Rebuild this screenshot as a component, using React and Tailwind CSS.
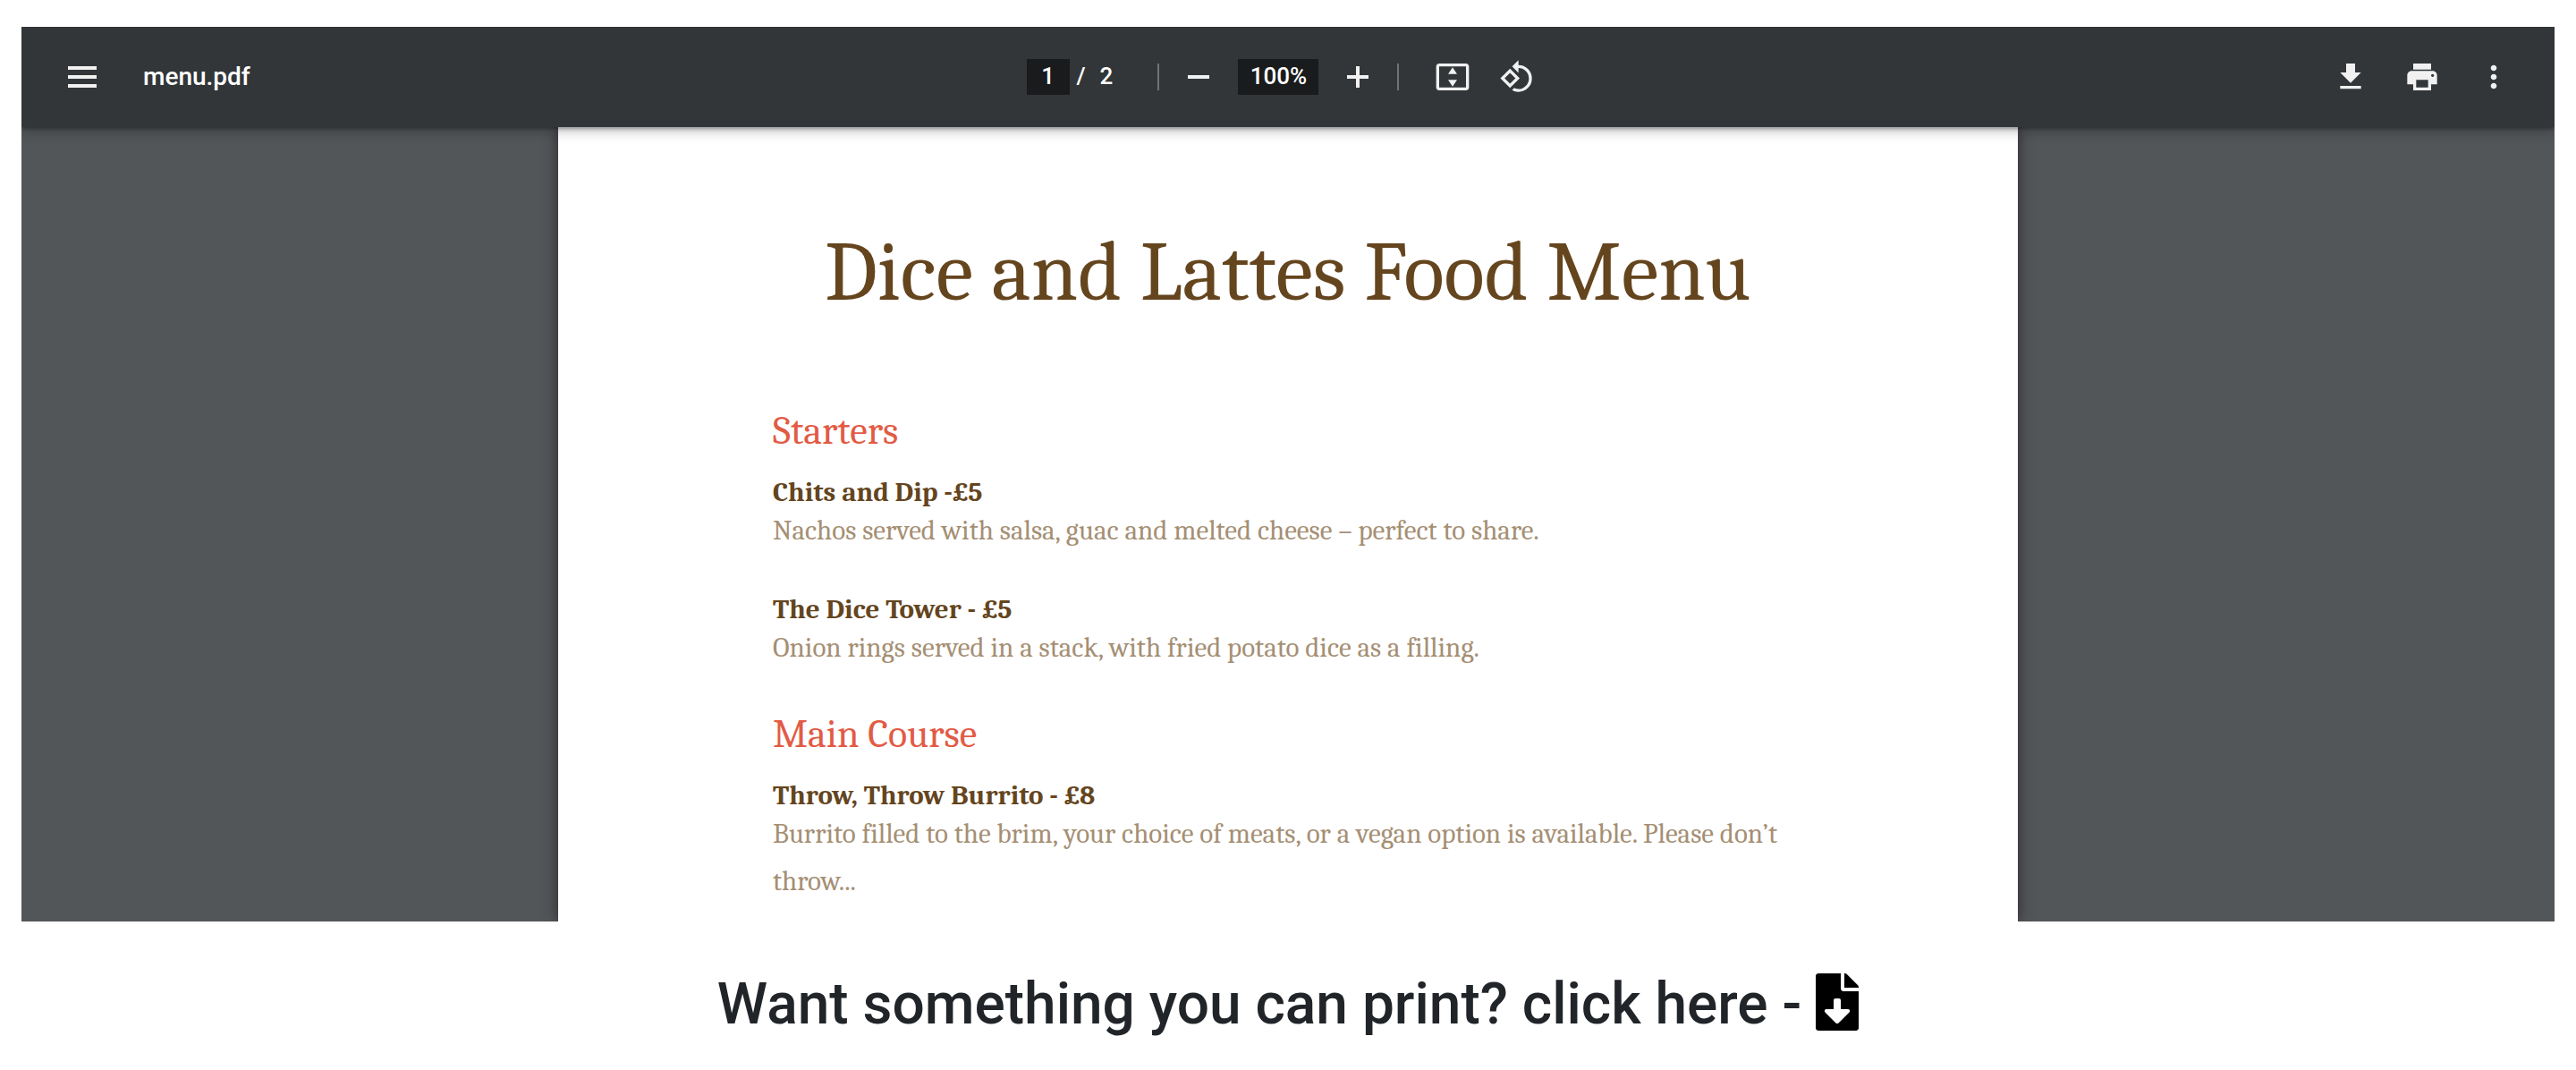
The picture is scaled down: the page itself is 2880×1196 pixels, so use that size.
import { FaFileDownload } from "react-icons/fa";
import { MdMoreVert, MdRotate90DegreesCcw } from "react-icons/md";

const sections = [
  {
    heading: "Starters",
    items: [
      { name: "Chits and Dip -£5", text: "Nachos served with salsa, guac and melted cheese – perfect to share." },
      { name: "The Dice Tower - £5", text: "Onion rings served in a stack, with fried potato dice as a filling." },
    ],
  },
  {
    heading: "Main Course",
    items: [
      {
        name: "Throw, Throw Burrito - £8",
        text: "Burrito filled to the brim, your choice of meats, or a vegan option is available. Please don’t throw...",
      },
    ],
  },
];

function ToolButton({ label, children }) {
  return (
    <button type="button" aria-label={label} className="flex size-16 shrink-0 items-center justify-center text-[#f1f1f1]">
      {children}
    </button>
  );
}

function Icon({ box, d }) {
  return (
    <svg viewBox={box} className="size-10" fill="currentColor" fillRule="evenodd" aria-hidden="true">
      <path d={d} />
    </svg>
  );
}

function Separator() {
  return <div className="h-[30px] w-0.5 bg-[#707375]" />;
}

function Toolbar() {
  return (
    <header className="relative z-10 grid h-28 grid-cols-[1fr_auto_1fr] items-center bg-[#323639] px-9 text-white shadow-[0_-4px_16px_rgba(0,0,0,0.09),0_8px_16px_rgba(0,0,0,0.06),0_2px_4px_rgba(0,0,0,0.3),0_4px_12px_rgba(0,0,0,0.15)]">
      <div className="flex items-center">
        <ToolButton label="Menu">
          <Icon box="0 0 20 20" d="M2 4h16v2H2zM2 9h16v2H2zM2 14h16v2H2z" />
        </ToolButton>
        <h1 className="ml-9 text-[28px] font-medium">menu.pdf</h1>
      </div>

      <div className="flex items-center pr-1 text-[26px] font-medium">
        <input aria-label="Page number" defaultValue="1" className="h-10 w-12 bg-[#191b1c] pb-0.5 text-center" />
        <span className="ml-2 w-[26px] pb-0.5">/</span>
        <span className="mr-[50px] pb-0.5">2</span>
        <Separator />
        <div className="flex items-center gap-3 px-3">
          <ToolButton label="Zoom out">
            <Icon box="0 0 20 20" d="M4 9h12v2H4z" />
          </ToolButton>
          <input aria-label="Zoom level" defaultValue="100%" className="h-10 w-[90px] bg-[#191b1c] pb-0.5 text-center" />
          <ToolButton label="Zoom in">
            <Icon box="0 0 20 20" d="M9 4h2v5h5v2h-5v5H9v-5H4V9h5z" />
          </ToolButton>
        </div>
        <Separator />
        <div className="ml-7 flex items-center gap-2">
          <ToolButton label="Fit to page">
            <Icon
              box="0 0 24 24"
              d="M21 3H3c-1.100 0-2 .9-2 2v14c0 1.100.9 2 2 2h18c1.100 0 2-.9 2-2V5c0-1.100-.9-2-2-2zm0 16H3V5h18zM12 5.500L9 10h6zM12 18.500L15 14H9z"
            />
          </ToolButton>
          <ToolButton label="Rotate counterclockwise">
            <MdRotate90DegreesCcw className="size-10" />
          </ToolButton>
        </div>
      </div>

      <div className="flex items-center justify-end gap-4">
        <ToolButton label="Download">
          <Icon box="0 0 24 24" d="M19 9h-4V3H9v6H5l7 7 7-7zM5 18v2h14v-2H5z" />
        </ToolButton>
        <ToolButton label="Print">
          <Icon
            box="0 0 24 24"
            d="M19 8H5c-1.660 0-3 1.340-3 3v6h4v4h12v-4h4v-6c0-1.660-1.340-3-3-3zm-3 11H8v-5h8v5zm3-7c-.55 0-1-.45-1-1s.45-1 1-1 1 .45 1 1-.45 1-1 1zM18 3H6v4h12V3z"
          />
        </ToolButton>
        <ToolButton label="More actions">
          <MdMoreVert className="size-10" />
        </ToolButton>
      </div>
    </header>
  );
}

function Page() {
  return (
    <article className="mx-auto w-full max-w-[1632px] grow bg-white px-60 pt-[107px] font-[Caladea,Cambria,serif] text-[#64451e] shadow-[0_0_14px_rgba(40,25,32,0.8)]">
      <h2 className="text-center text-[94px] leading-[112px]">Dice and Lattes Food Menu</h2>
      <div className="mt-[95px] flex flex-col gap-11">
        {sections.map((section) => (
          <section key={section.heading}>
            <h3 className="text-[44px] leading-[52px] text-[#e25b45]">{section.heading}</h3>
            <div className="mt-[25px] flex flex-col gap-11 text-[31px]">
              {section.items.map((item) => (
                <div key={item.name}>
                  <h4 className="leading-[34px] font-bold">{item.name}</h4>
                  <p className="leading-[53px] text-[#a58f74]">{item.text}</p>
                </div>
              ))}
            </div>
          </section>
        ))}
      </div>
    </article>
  );
}

export default function App() {
  return (
    <main className="bg-white px-6 pt-[30px] font-[Roboto,sans-serif]">
      <div className="flex h-[1000px] flex-col overflow-hidden bg-[#525659]">
        <Toolbar />
        <Page />
      </div>
      <h2 className="mt-[54px] text-center text-[64px] leading-[77px] font-medium text-[#212529]">
        Want something you can print? click here -{" "}
        <a href="#menu" aria-label="Download the menu" className="text-black">
          <FaFileDownload className="inline h-16 w-12 align-[-8px]" />
        </a>
      </h2>
    </main>
  );
}
